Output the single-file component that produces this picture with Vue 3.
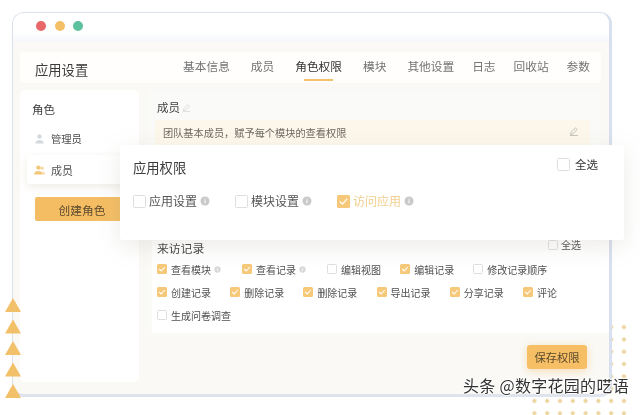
<script setup>
const tabs = ['基本信息', '成员', '角色权限', '模块', '其他设置', '日志', '回收站', '参数']
const rows = [
  [
    { t: '查看模块', c: true, i: true },
    { t: '查看记录', c: true, i: true },
    { t: '编辑视图', c: false },
    { t: '编辑记录', c: true },
    { t: '修改记录顺序', c: false }
  ],
  [
    { t: '创建记录', c: true },
    { t: '删除记录', c: true },
    { t: '删除记录', c: true },
    { t: '导出记录', c: true },
    { t: '分享记录', c: true },
    { t: '评论', c: true }
  ],
  [{ t: '生成问卷调查', c: false }]
]
const perms = [
  { t: '应用设置', c: false },
  { t: '模块设置', c: false },
  { t: '访问应用', c: true }
]
</script>

<template>
  <div class="stage">
    <div class="dots"></div>
    <div class="window">
      <div class="titlebar">
        <span class="light red"></span>
        <span class="light amber"></span>
        <span class="light green"></span>
      </div>
      <div class="body">
        <header class="topbar">
          <span class="app-title">应用设置</span>
          <nav class="tabs">
            <span v-for="t in tabs" :key="t" class="tab" :class="{ active: t === '角色权限' }">{{ t }}</span>
          </nav>
        </header>
        <div class="columns">
          <aside class="sidebar">
            <div class="side-title">角色</div>
            <div class="role">
              <svg class="role-icon" viewBox="0 0 12 12"><circle cx="6" cy="3.2" r="2.4" fill="#d5d8de"/><path d="M1.5 11c0-2.6 2-4 4.500-4s4.500 1.400 4.500 4z" fill="#d5d8de"/></svg>
              <span>管理员</span>
            </div>
            <div class="role selected">
              <svg class="role-icon" viewBox="0 0 12 12"><circle cx="4.800" cy="3.400" r="2.400" fill="#f3c77c"/><circle cx="8.800" cy="4" r="1.800" fill="#f6d8a2"/><path d="M0 11c0-2.800 2.200-4 4.800-4s4.800 1.200 4.800 4z" fill="#f3c77c"/><path d="M10 11h2c0-2-1-3.400-3-3.700 .6 1 1 2.300 1 3.700z" fill="#f6d8a2"/></svg>
              <span>成员</span>
            </div>
            <button class="create">创建角色</button>
          </aside>
          <main class="main">
            <div class="panel">
              <div class="member-head">
                <span>成员</span>
                <svg class="pencil" viewBox="0 0 10 10"><path d="M1.500 8.500l.6-2.300 4.400-4.400 1.700 1.700-4.400 4.400zM1 9.500h8" fill="none" stroke="#d4d4d4" stroke-width=".8"/></svg>
              </div>
              <div class="note">
                <span>团队基本成员，赋予每个模块的查看权限</span>
                <svg class="pencil" viewBox="0 0 10 10"><path d="M1.500 8.500l.6-2.300 4.400-4.400 1.700 1.700-4.400 4.400zM1 9.500h8" fill="none" stroke="#b5b5ae" stroke-width=".8"/></svg>
              </div>
              <section class="records">
                <div class="records-head">
                  <span class="records-title">来访记录</span>
                  <label class="check-item">
                    <span class="box"></span>
                    <span>全选</span>
                  </label>
                </div>
                <div v-for="(row, r) in rows" :key="r" class="check-row">
                  <label v-for="(it, n) in row" :key="n" class="check-item">
                    <span class="box" :class="{ on: it.c }">
                      <svg v-if="it.c" viewBox="0 0 10 10"><path d="M2.200 5l2 2 3.600-4" fill="none" stroke="#fff" stroke-width="1.100"/></svg>
                    </span>
                    <span>{{ it.t }}</span>
                    <svg v-if="it.i" class="info small" viewBox="0 0 10 10"><circle cx="5" cy="5" r="4.500" fill="#d8d8d8"/><path d="M5 4.300v3M5 2.400v1" stroke="#fff" stroke-width="1.100"/></svg>
                  </label>
                </div>
              </section>
            </div>
            <div class="footer">
              <button class="save">保存权限</button>
            </div>
          </main>
        </div>
      </div>
    </div>

    <div class="dialog">
      <div class="dialog-head">
        <span class="dialog-title">应用权限</span>
        <label class="select-all">
          <span class="box large"></span>
          <span>全选</span>
        </label>
      </div>
      <div class="perm-row">
        <label v-for="p in perms" :key="p.t" class="perm" :class="{ on: p.c }">
          <span class="box large" :class="{ on: p.c }">
            <svg v-if="p.c" viewBox="0 0 10 10"><path d="M2.200 5l2 2 3.600-4" fill="none" stroke="#fff" stroke-width="1"/></svg>
          </span>
          <span>{{ p.t }}</span>
          <svg class="info" viewBox="0 0 10 10"><circle cx="5" cy="5" r="4.500" fill="#c9c9c9"/><path d="M5 4.300v3M5 2.400v1" stroke="#fff" stroke-width="1.100"/></svg>
        </label>
      </div>
    </div>

    <div class="triangles">
      <span v-for="n in 5" :key="n" class="tri"></span>
    </div>

    <div class="mark">头条 @数字花园的呓语</div>
  </div>
</template>

<style>
html, body { margin: 0; background: #fff; }
</style>

<style scoped>
.stage {
  position: relative;
  width: 640px;
  height: 415px;
  overflow: hidden;
  background: #fff;
  font-family: "Noto Sans CJK SC", "Noto Sans", sans-serif;
  color: #4b4b4b;
  font-size: 10px;
  filter: blur(.45px);
}
.dots {
  position: absolute;
  left: 528px;
  top: 321px;
  width: 102px;
  height: 94px;
  background-image: radial-gradient(circle, #ecd49c 1.800px, transparent 2.300px);
  background-size: 12.800px 12.300px;
}
.window {
  position: absolute;
  left: 12px;
  top: 12px;
  width: 600px;
  height: 385px;
  box-sizing: border-box;
  display: flex;
  flex-direction: column;
  background: #faf9f6;
  border: 1px solid #dbe1ec;
  border-right: 3px solid #d8dfee;
  border-bottom: 3px solid #dfe3ee;
  border-radius: 12px;
  overflow: hidden;
}
.titlebar {
  height: 29px;
  flex: none;
  display: flex;
  align-items: center;
  gap: 8.500px;
  padding: 0 0 3px 23px;
  box-sizing: border-box;
  background: linear-gradient(#fff 65%, #f4f6fa);
}
.light { width: 10px; height: 10px; border-radius: 50%; }
.red { background: #e8686a; }
.amber { background: #f4c067; }
.green { background: #5cc19c; }
.body { flex: 1; padding: 10px 8px 0 7px; display: flex; flex-direction: column; gap: 7px; }
.topbar {
  height: 31px;
  flex: none;
  background: #fffefd;
  border-radius: 3px;
  display: flex;
  align-items: center;
  justify-content: space-between;
  padding: 0 11px 0 15px;
}
.app-title { font-size: 13.300px; color: #3c3c3c; padding-top: 3px; }
.tabs { display: flex; gap: 18px; font-size: 11.700px; color: #737373; }
.tab { position: relative; line-height: 18px; padding-bottom: 4px; }
.tab:nth-child(-n+4) { margin-right: 3px; }
.tab.active { color: #333; }
.tab.active::after {
  content: "";
  position: absolute;
  left: 9px;
  right: 9px;
  bottom: -2px;
  height: 2px;
  background: #f3c16a;
}
.columns { display: flex; gap: 8px; align-items: flex-start; }
.sidebar {
  width: 119px;
  height: 292px;
  flex: none;
  box-sizing: border-box;
  background: #fff;
  border-radius: 5px;
  padding: 11px 0 0 12px;
}
.side-title { font-size: 11.500px; line-height: 16px; color: #3c3c3c; }
.role {
  display: flex;
  align-items: center;
  gap: 6px;
  height: 29px;
  margin-top: 7px;
  padding-left: 2px;
  font-size: 10.300px;
}
.role-icon { width: 11px; height: 12px; }
.role.selected {
  margin: 2px 0 0 -5px;
  padding-left: 7px;
  font-size: 11px;
  color: #555;
  border-radius: 3px 0 0 3px;
  box-shadow: 0 3px 9px rgba(200, 190, 170, .28);
}
.create {
  display: block;
  width: 94px;
  height: 24px;
  margin: 13px 0 0 3px;
  border: 0;
  border-radius: 2px;
  background: #f4bd63;
  color: #5b4a2e;
  font: inherit;
  font-size: 11.700px;
}
.main { flex: 1; min-width: 0; }
.panel { background: #fafaf8; border-radius: 4px 4px 0 0; }
.member-head {
  display: flex;
  align-items: center;
  gap: 2px;
  height: 30px;
  padding: 4px 0 0 10px;
  box-sizing: border-box;
  font-size: 11.500px;
  color: #3f3f3f;
}
.pencil { width: 9px; height: 9px; flex: none; }
.note {
  height: 26px;
  margin: 0 11px 0 8px;
  padding: 0 8px 2px;
  box-sizing: border-box;
  display: flex;
  align-items: center;
  justify-content: space-between;
  background: linear-gradient(#fcf7ea, #fdf8ec);
  font-size: 10.200px;
  color: #6d6a63;
}
.note .pencil { width: 10px; height: 10px; margin: -3px 3px 0 0; }
.records {
  margin: 0 -8px 0 5px;
  padding: 93px 28px 6px 5px;
  background: #fff;
  height: 187px;
  box-sizing: border-box;
}
.records-head {
  display: flex;
  justify-content: space-between;
  align-items: center;
  height: 16px;
  margin-bottom: 3px;
}
.records-title { font-size: 11.800px; color: #3f3f3f; margin-top: 1px; }
.records-head .check-item { margin-top: -4px; gap: 3px; }
.check-row { display: flex; gap: 19.200px; height: 23px; align-items: center; }
.check-row .box { margin-top: -2px; }
.check-item { display: flex; align-items: center; gap: 4px; line-height: 14px; color: #505050; font-size: 10px; white-space: nowrap; }
.box {
  width: 10px;
  height: 10px;
  flex: none;
  box-sizing: border-box;
  border: 1px solid #dedede;
  border-radius: 1.500px;
  background: #fff;
  display: inline-flex;
}
.box svg { width: 100%; height: 100%; }
.box.on { background: #f5c979; border: 0; }
.box.large { width: 13px; height: 13px; }
.info { width: 10px; height: 10px; flex: none; margin-left: -2px; }
.info.small { width: 7px; height: 7px; margin: 0 1.800px 0 -1px; }
.footer { display: flex; justify-content: flex-end; padding: 12px 14px 0 0; }
.save {
  width: 60px;
  height: 24px;
  border: 0;
  border-radius: 3px;
  background: #f6bf66;
  color: #5b4a2e;
  font: inherit;
  font-size: 11.300px;
  box-shadow: 0 2px 8px rgba(246, 191, 102, .45);
}
.dialog {
  position: absolute;
  left: 120px;
  top: 145px;
  width: 504px;
  height: 95px;
  box-sizing: border-box;
  background: #fff;
  border-radius: 3px;
  padding: 11px 26px 0 13px;
  box-shadow: 0 6px 22px rgba(170, 165, 150, .22);
}
.dialog-head { display: flex; justify-content: space-between; align-items: flex-start; height: 36px; }
.dialog-title { font-size: 13.300px; color: #3c3c3c; line-height: 24px; }
.select-all { display: flex; align-items: center; gap: 5px; font-size: 11.500px; color: #333; line-height: 16px; }
.perm-row { display: flex; gap: 25px; }
.perm { display: flex; align-items: center; gap: 3px; font-size: 12px; color: #555; line-height: 18px; }
.perm.on { color: #f0cf8d; }
.perm .info { margin-left: 0; }
.triangles {
  position: absolute;
  left: 5px;
  top: 298px;
  display: flex;
  flex-direction: column;
  gap: 7.500px;
}
.tri {
  width: 16px;
  height: 14px;
  background: #f3c06a;
  clip-path: polygon(50% 0, 100% 100%, 0 100%);
}
.mark {
  position: absolute;
  left: 463px;
  top: 375px;
  font-size: 16px;
  letter-spacing: .3px;
  line-height: 20px;
  color: #333;
  white-space: nowrap;
  text-shadow: -1px 0 #fff, 1px 0 #fff, 0 -1px #fff, 0 1px #fff;
}
</style>
